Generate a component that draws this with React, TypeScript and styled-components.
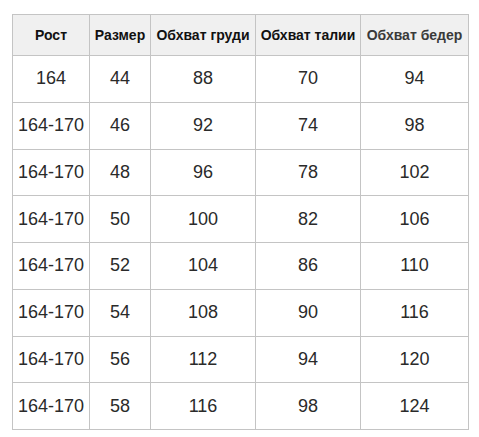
import React, { FC } from 'react';
import styled, { createGlobalStyle } from 'styled-components';

const GlobalStyle = createGlobalStyle`
  html, body {
    margin: 0;
    padding: 0;
    background: #ffffff;
  }
  body {
    font-family: "Liberation Sans", Arial, sans-serif;
  }
`;

const Page = styled.div`
  padding: 14px 0 0 12px;
`;

const SizeTable = styled.table`
  border-collapse: collapse;
  table-layout: fixed;
  width: 456px;
`;

const HeadCell = styled.th<{ muted?: boolean }>`
  height: 40px;
  padding: 0;
  border: 1px solid #c4c4c4;
  background: #f0f0f0;
  font-size: 14px;
  font-weight: bold;
  text-align: center;
  color: ${({ muted }) => (muted ? '#3a3a3a' : '#111111')};
  white-space: nowrap;
`;

const Row = styled.tr`
  height: 46.75px;
`;

const Cell = styled.td`
  padding: 0;
  border: 1px solid #c4c4c4;
  font-size: 18px;
  color: #2a2a2a;
  text-align: center;
  vertical-align: middle;
`;

const columns = [
  { title: 'Рост', width: 77 },
  { title: 'Размер', width: 61 },
  { title: 'Обхват груди', width: 105 },
  { title: 'Обхват талии', width: 105 },
  { title: 'Обхват бедер', width: 108, muted: true },
];

const rows = [
  ['164', '44', '88', '70', '94'],
  ['164-170', '46', '92', '74', '98'],
  ['164-170', '48', '96', '78', '102'],
  ['164-170', '50', '100', '82', '106'],
  ['164-170', '52', '104', '86', '110'],
  ['164-170', '54', '108', '90', '116'],
  ['164-170', '56', '112', '94', '120'],
  ['164-170', '58', '116', '98', '124'],
];

const App: FC = () => {
  return (
    <Page>
      <GlobalStyle />
      <SizeTable>
        <colgroup>
          {columns.map((c) => (
            <col key={c.title} style={{ width: c.width }} />
          ))}
        </colgroup>
        <thead>
          <tr>
            {columns.map((c) => (
              <HeadCell key={c.title} muted={c.muted}>
                {c.title}
              </HeadCell>
            ))}
          </tr>
        </thead>
        <tbody>
          {rows.map((r, i) => (
            <Row key={i}>
              {r.map((v, j) => (
                <Cell key={j}>{v}</Cell>
              ))}
            </Row>
          ))}
        </tbody>
      </SizeTable>
    </Page>
  );
};

export default App;
